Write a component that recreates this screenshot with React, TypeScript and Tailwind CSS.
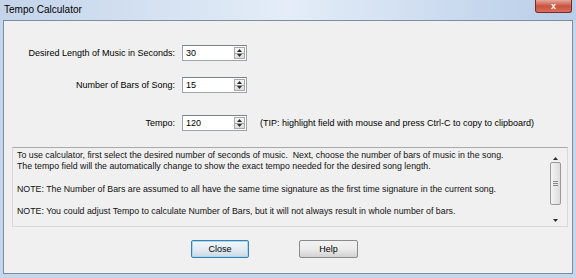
import React from 'react';

const font = { fontFamily: '"Liberation Sans", Arial, sans-serif' };

function Arrow({ up }: { up?: boolean }) {
  return (
    <svg width="5" height="3" viewBox="0 0 5 3" className="block">
      <path d={up ? 'M0 3 L2.5 0 L5 3 Z' : 'M0 0 L2.5 3 L5 0 Z'} fill="#2b2b2b" />
    </svg>
  );
}

function Spin({ value }: { value: string }) {
  return (
    <div className="flex h-4 w-[65px] border border-[#9da3ad] border-t-[#7c818a] bg-white">
      <span className="flex-1 pl-[3px] text-[9px] leading-[14px] text-black">{value}</span>
      <div className="my-[1px] mr-[1px] flex w-[11px] flex-col border border-[#a7a7a7] bg-gradient-to-b from-[#f6f6f6] to-[#dedede]">
        <div className="flex flex-1 items-center justify-center border-b border-[#a7a7a7]">
          <Arrow up />
        </div>
        <div className="flex flex-1 items-center justify-center">
          <Arrow />
        </div>
      </div>
    </div>
  );
}

export default function App() {
  return (
    <div className="w-[576px] h-[278px] overflow-hidden bg-[#c5d6eb] text-black" style={font}>
      {/* Title bar */}
      <div className="relative h-5 bg-gradient-to-r from-[#c3d4ea] via-[#e4edf8] to-[#b8cde8]">
        <span className="absolute left-[4px] top-[3px] text-[10px] leading-[13px] text-black">Tempo Calculator</span>
        <div className="absolute right-[4px] top-0 flex h-[13px] w-[37px] items-center justify-center rounded-b-[3px] border border-t-0 border-[#7a2a22] bg-gradient-to-b from-[#e3a79c] via-[#c8523f] to-[#d8705a]">
          <span className="text-[9px] font-bold leading-none text-white">x</span>
        </div>
      </div>

      {/* Client */}
      <div className="mx-[3px] h-[254px] border border-[#7b8ca3] bg-[#f0f0f0]">
        <div className="flex flex-col pt-[24px]">
          {/* Row 1 */}
          <div className="flex items-center">
            <span className="w-[172px] pr-[1px] text-right text-[9px] leading-4">Desired Length of Music in Seconds:</span>
            <div className="ml-[6px]">
              <Spin value="30" />
            </div>
          </div>
          {/* Row 2 */}
          <div className="mt-[16px] flex items-center">
            <span className="w-[172px] pr-[1px] text-right text-[9px] leading-4">Number of Bars of Song:</span>
            <div className="ml-[6px]">
              <Spin value="15" />
            </div>
          </div>
          {/* Row 3 */}
          <div className="mt-[22px] flex items-center">
            <span className="w-[172px] pr-[1px] text-right text-[9px] leading-4">Tempo:</span>
            <div className="ml-[6px]">
              <Spin value="120" />
            </div>
            <span className="ml-[13px] text-[9px] leading-4">(TIP: highlight field with mouse and press Ctrl-C to copy to clipboard)</span>
          </div>

          {/* Help text area */}
          <div className="ml-[8px] mt-[16px] flex h-[80px] w-[556px] border border-[#d9d9d9] border-t-[#a9a9a9] bg-[#f0f0f0]">
            <div className="flex-1 whitespace-pre-wrap pl-[4px] pt-[2px] text-[8.8px] leading-[11.2px] text-[#111]">
              {'To use calculator, first select the desired number of seconds of music.  Next, choose the number of bars of music in the song.\nThe tempo field will the automatically change to show the exact tempo needed for the desired song length.\n\nNOTE: The Number of Bars are assumed to all have the same time signature as the first time signature in the current song.\n\nNOTE: You could adjust Tempo to calculate Number of Bars, but it will not always result in whole number of bars.'}
            </div>
            {/* Scrollbar */}
            <div className="mr-[5px] flex w-[13px] flex-col items-center">
              <div className="flex h-[12px] items-end justify-center">
                <Arrow up />
              </div>
              <div className="mt-[2px] flex h-[43px] w-[11px] items-center justify-center rounded-[2px] border border-[#9a9a9a] bg-gradient-to-r from-[#f4f4f4] to-[#dcdcdc]">
                <div className="flex w-[5px] flex-col gap-[1px]">
                  <div className="h-px bg-[#8a8a8a]" />
                  <div className="h-px bg-[#8a8a8a]" />
                  <div className="h-px bg-[#8a8a8a]" />
                </div>
              </div>
              <div className="mt-auto mb-[4px] flex justify-center">
                <Arrow />
              </div>
            </div>
          </div>

          {/* Buttons */}
          <div className="mt-[13px] flex pl-[187px]">
            <button className="h-[18px] w-[58px] rounded-[2px] border border-[#3c7fb1] bg-gradient-to-b from-[#f2f7fb] via-[#e3ecf3] to-[#cad9e6] text-[9px] leading-none shadow-[inset_0_0_0_1px_#a8d8f0]">
              Close
            </button>
            <button className="ml-[50px] h-[18px] w-[59px] rounded-[2px] border border-[#8a8a8a] bg-gradient-to-b from-[#f2f2f2] via-[#ebebeb] to-[#d2d2d2] text-[9px] leading-none">
              Help
            </button>
          </div>
        </div>
      </div>
    </div>
  );
}
